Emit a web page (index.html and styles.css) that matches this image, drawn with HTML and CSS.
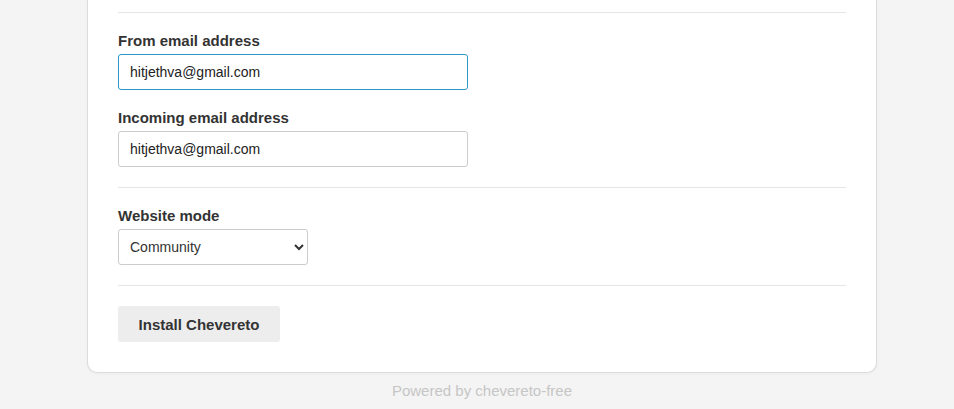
FILE: index.html
```html
<!DOCTYPE html>
<html lang="en">
<head>
  <meta charset="UTF-8">
  <title>Install | Chevereto</title>
  <meta name="viewport" content="width=device-width, initial-scale=1.0">
  <link rel="stylesheet" href="styles.css">
</head>
<body>

<div class="install-card">
  <div class="section">
    <div class="field">
      <label for="from_email">From email address</label>
      <input type="email" id="from_email" class="focused" value="hitjethva@gmail.com">
    </div>
    <div class="field">
      <label for="incoming_email">Incoming email address</label>
      <input type="email" id="incoming_email" value="hitjethva@gmail.com">
    </div>
  </div>

  <div class="section">
    <div class="field">
      <label for="website_mode">Website mode</label>
      <select id="website_mode">
        <option selected>Community</option>
        <option>Personal</option>
      </select>
    </div>
  </div>

  <div class="section last">
    <button type="submit" class="btn-install">Install Chevereto</button>
  </div>
</div>

<div class="footer">Powered by chevereto-free</div>

</body>
</html>
```

FILE: styles.css
```css
* {
  margin: 0;
  padding: 0;
  box-sizing: border-box;
}

body {
  font-family: 'Liberation Sans', Arial, sans-serif;
  font-size: 15px;
  line-height: 16px;
  background: #f4f4f4;
  color: #333;
}

.install-card {
  width: 790px;
  margin-left: 87px;
  padding: 12px 30px 0;
  background: #fff;
  border: 1px solid #dcdcdc;
  border-top: none;
  border-radius: 0 0 10px 10px;
  box-shadow: 0 1px 3px rgba(0, 0, 0, 0.04);
}

.section {
  display: flex;
  flex-direction: column;
  gap: 20px;
  padding: 20px 0;
  border-top: 1px solid #e6e6e6;
}

.section.last {
  padding-bottom: 30px;
}

.field label {
  display: block;
  font-weight: bold;
  margin-bottom: 5px;
}

.field input,
.field select {
  display: block;
  height: 36px;
  padding: 0 11px;
  font-family: inherit;
  font-size: 14px;
  color: #222;
  background: #fff;
  border: 1px solid #ccc;
  border-radius: 3px;
  outline: none;
}

.field input {
  width: 350px;
}

.field input.focused {
  border-color: #2b98c9;
}

.field select {
  width: 190px;
  padding-left: 7px;
  color: #333;
}

.btn-install {
  align-self: flex-start;
  width: 162px;
  height: 36px;
  border: none;
  border-radius: 3px;
  background: #ededed;
  color: #333;
  font-family: inherit;
  font-size: 15px;
  font-weight: bold;
  cursor: pointer;
}

.footer {
  width: 790px;
  margin: 10px 0 0 87px;
  text-align: center;
  color: #c6c6c6;
}
```
